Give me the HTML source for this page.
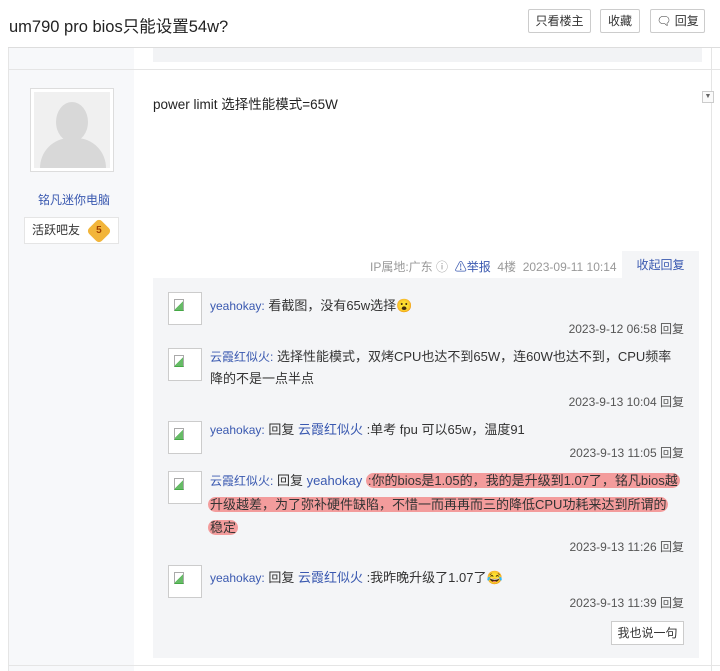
<!DOCTYPE html><html><head><meta charset="utf-8"><style>
*{margin:0;padding:0;box-sizing:border-box}
body{width:720px;height:671px;background:#fff;font-family:"Liberation Sans","Noto Sans CJK SC",sans-serif;position:relative;overflow:hidden;color:#333}
.a{position:absolute}
.btn{position:absolute;top:9px;height:24px;border:1px solid #ccc;border-radius:2px;background:#fff;font-size:12px;line-height:22px;text-align:center;color:#333}
.av{position:absolute;left:168px;width:34px;height:33px;border:1px solid #ccc;background:#fff}
.av:after{content:"";position:absolute;left:5px;top:6px;width:8px;height:10px;border:1px solid #aaa;border-bottom-color:#4a4;background:linear-gradient(135deg,#fff 50%,#6b6 50%)}
.ln{position:absolute;left:210px;font-size:13px;color:#333;line-height:22px;width:474px}
.u{color:#3a59b0}
.t{position:absolute;right:36px;font-size:12px;color:#555}
.hl{background:#f39c9c;border-radius:9px;padding:0 2px}
</style></head><body>
<div class="a" style="left:9px;top:13px;font-size:16.5px;color:#222">um790 pro bios只能设置54w?</div>
<div class="btn" style="left:528px;width:63px">只看楼主</div>
<div class="btn" style="left:600px;width:40px">收藏</div>
<div class="btn" style="left:650px;width:55px">🗨 回复</div>
<div class="a" style="left:8px;top:47px;width:712px;height:1px;background:#ddd"></div>
<div class="a" style="left:8px;top:48px;width:1px;height:623px;background:#e5e5e5"></div>
<div class="a" style="left:9px;top:48px;width:125px;height:623px;background:#f7f8fa"></div>
<div class="a" style="left:153px;top:48px;width:549px;height:14px;background:#f2f3f5"></div>
<div class="a" style="left:9px;top:69px;width:711px;height:1px;background:#e5e5e5"></div>
<div class="a" style="left:711px;top:48px;width:1px;height:623px;background:#e5e5e5"></div>
<div class="a" style="left:30px;top:88px;width:84px;height:84px;border:1px solid #ddd;background:#fff;padding:3px"><div style="width:76px;height:76px;background:#f0f0f0;position:relative;overflow:hidden"><div class="a" style="left:22px;top:10px;width:32px;height:40px;border-radius:50%;background:#d8d8d8"></div><div class="a" style="left:6px;top:46px;width:66px;height:40px;border-radius:30px 30px 0 0;background:#d8d8d8"></div></div></div>
<div class="a" style="left:38px;top:191px;font-size:12px;color:#3a59b0">铭凡迷你电脑</div>
<div class="a" style="left:24px;top:217px;width:95px;height:27px;border:1px solid #e5e5e5;background:#fff;font-size:12px;line-height:25px;padding-left:7px">活跃吧友<span style="display:inline-block;margin-left:10px;width:18px;height:18px;background:#f2b53a;border-radius:4px;transform:rotate(45deg);vertical-align:middle;text-align:center;font-size:10px;line-height:18px;color:#a04000"><b style="display:inline-block;transform:rotate(-45deg)">5</b></span></div>
<div class="a" style="left:153px;top:93px;font-size:13.5px;color:#222">power limit 选择性能模式=65W</div>
<div class="a" style="left:702px;top:91px;width:12px;height:12px;border:1px solid #ccc;background:#fafafa;font-size:7px;line-height:10px;text-align:center;color:#666">▼</div>
<div class="a" style="left:370px;top:258px;font-size:12px;color:#999">IP属地:广东 ⓘ &nbsp;<span style="color:#3a59b0">⚠举报</span> &nbsp;4楼 &nbsp;2023-09-11 10:14</div>
<div class="a" style="left:622px;top:251px;width:77px;height:28px;background:#f4f5f7;font-size:12px;color:#3a59b0;line-height:28px;text-align:center">收起回复</div>
<div class="a" style="left:153px;top:278px;width:546px;height:380px;background:#f4f5f7"></div>
<div class="a" style="left:9px;top:665px;width:711px;height:1px;background:#e5e5e5"></div>
<div class="av" style="top:292px"></div>
<div class="ln" style="top:295px"><span class="u" style="font-size:12px">yeahokay:</span> 看截图，没有65w选择<span style="color:#e8a020">😮</span></div>
<div class="t" style="top:320px">2023-9-12 06:58 回复</div>
<div class="av" style="top:348px"></div>
<div class="ln" style="top:346px;width:470px"><span class="u" style="font-size:12px">云霞红似火:</span> 选择性能模式，双烤CPU也达不到65W，连60W也达不到，CPU频率<br>降的不是一点半点</div>
<div class="t" style="top:393px">2023-9-13 10:04 回复</div>
<div class="av" style="top:421px"></div>
<div class="ln" style="top:419px"><span class="u" style="font-size:12px">yeahokay:</span> 回复 <span class="u">云霞红似火</span> :单考 fpu 可以65w，温度91</div>
<div class="t" style="top:444px">2023-9-13 11:05 回复</div>
<div class="av" style="top:471px"></div>
<div class="ln" style="top:469px;line-height:23px;width:490px"><span class="u" style="font-size:12px">云霞红似火:</span> 回复 <span class="u">yeahokay</span> <span class="hl">:你的bios是1.05的，我的是升级到1.07了，铭凡bios越</span><br><span class="hl" style="margin-left:-2px">升级越差，为了弥补硬件缺陷，不惜一而再再而三的降低CPU功耗来达到所谓的</span><br><span class="hl" style="margin-left:-2px">稳定</span></div>
<div class="t" style="top:538px">2023-9-13 11:26 回复</div>
<div class="av" style="top:565px"></div>
<div class="ln" style="top:567px"><span class="u" style="font-size:12px">yeahokay:</span> 回复 <span class="u">云霞红似火</span> :我昨晚升级了1.07了😂</div>
<div class="t" style="top:594px">2023-9-13 11:39 回复</div>
<div class="a" style="left:611px;top:621px;width:73px;height:24px;border:1px solid #ccc;background:#fff;font-size:12px;line-height:22px;text-align:center">我也说一句</div>
</body></html>
